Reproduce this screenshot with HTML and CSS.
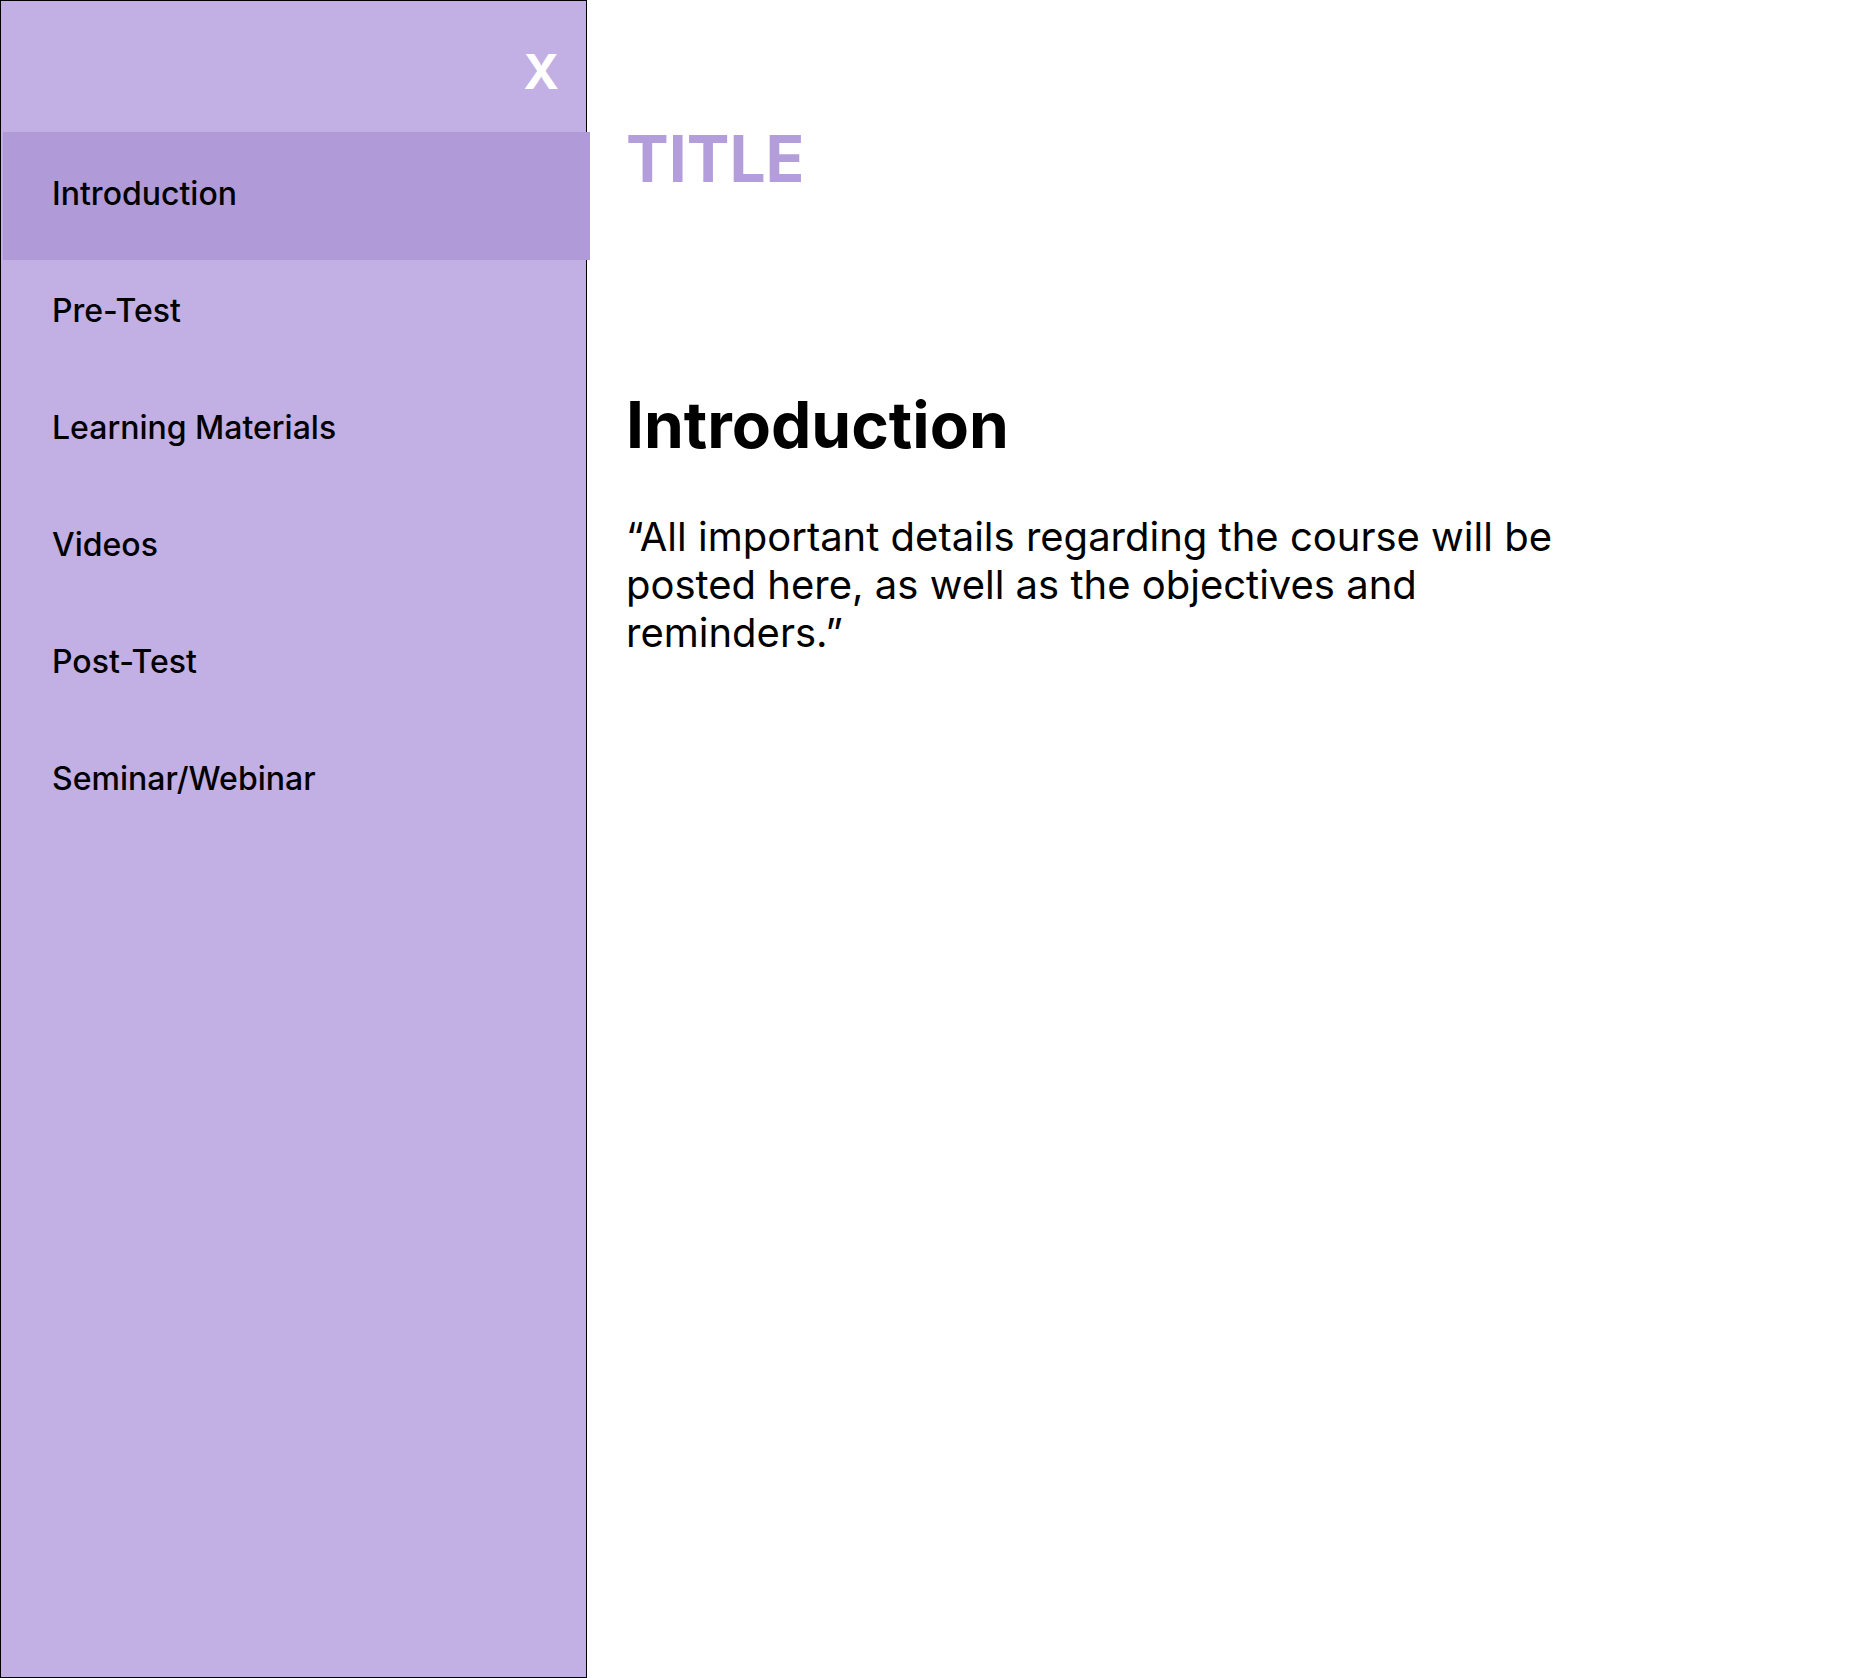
FILE: index.html
```html
<!DOCTYPE html>
<html lang="en">
<head>
<meta charset="utf-8">
<title>Course</title>
<link rel="stylesheet" href="styles.css">
</head>
<body>
<div class="layout">
  <aside class="sidebar">
    <div class="sidebar-header">
      <button class="close-btn" type="button">X</button>
    </div>
    <nav class="nav">
      <a class="nav-item active" href="#">Introduction</a>
      <a class="nav-item" href="#">Pre-Test</a>
      <a class="nav-item" href="#">Learning Materials</a>
      <a class="nav-item" href="#">Videos</a>
      <a class="nav-item" href="#">Post-Test</a>
      <a class="nav-item" href="#">Seminar/Webinar</a>
    </nav>
  </aside>
  <main class="content">
    <h1 class="page-title">TITLE</h1>
    <h2 class="section-title">Introduction</h2>
    <p class="section-text">“All important details regarding the course will be posted here, as well as the objectives and reminders.”</p>
  </main>
</div>
</body>
</html>
```
FILE: styles.css
```css
* {
  box-sizing: border-box;
}

html, body {
  margin: 0;
  padding: 0;
  background: #ffffff;
}

body {
  font-family: "Inter", "Noto Sans", sans-serif;
  color: #000000;
}

.layout {
  display: flex;
  min-height: 100vh;
}

.sidebar {
  flex: 0 0 587px;
  width: 587px;
  min-height: 100vh;
  background: #c2afe3;
  border: 1px solid #000000;
  display: flex;
  flex-direction: column;
}

.sidebar-header {
  height: 131px;
  display: flex;
  justify-content: flex-end;
  align-items: flex-start;
  padding: 47px 27px 0 0;
}

.close-btn {
  background: none;
  border: 0;
  padding: 0;
  margin: 0;
  font-family: "Inter", sans-serif;
  font-weight: 700;
  font-size: 48px;
  line-height: 48px;
  color: #ffffff;
  cursor: pointer;
}

.nav {
  display: flex;
  flex-direction: column;
}

.nav-item {
  height: 117px;
  display: flex;
  align-items: center;
  margin: 0 -4px 0 2px;
  padding-left: 49px;
  font-size: 32px;
  font-weight: 450;
  color: #000000;
  text-decoration: none;
}

.nav-item.active {
  height: 128px;
  padding-bottom: 5px;
  margin-bottom: -8px;
  background: #b09bd8;
  position: relative;
}

.content {
  flex: 1;
  padding: 127px 0 0 39px;
}

.page-title {
  margin: 0;
  font-size: 64px;
  line-height: 64px;
  font-weight: 700;
  color: #b39ddb;
}

.section-title {
  margin: 202px 0 0;
  font-size: 64px;
  line-height: 64px;
  font-weight: 700;
}

.section-text {
  margin: 56px 0 0;
  max-width: 980px;
  font-size: 40px;
  line-height: 48px;
  font-weight: 400;
}
```
